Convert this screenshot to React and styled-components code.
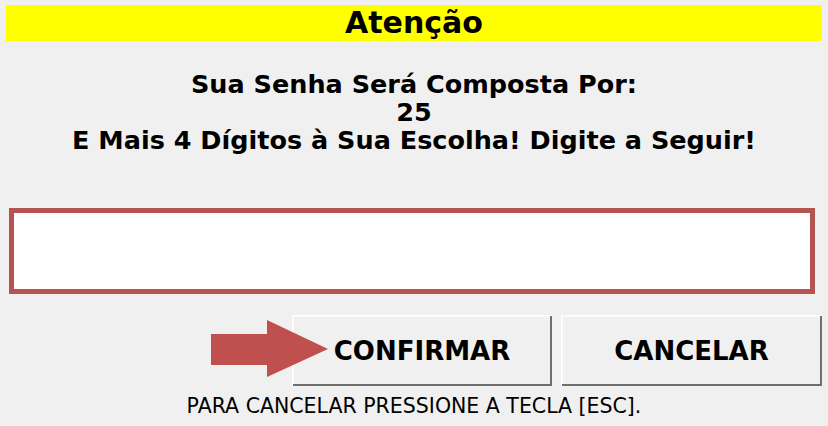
import React from 'react';
import styled, { createGlobalStyle } from 'styled-components';

const GlobalStyle = createGlobalStyle`
  html, body {
    margin: 0;
    background: #f0f0f0;
  }
  body {
    font-family: "DejaVu Sans", "Liberation Sans", sans-serif;
    color: #000;
  }
`;

const Dialog = styled.div`
  display: flex;
  flex-direction: column;
  width: 828px;
  height: 426px;
  box-sizing: border-box;
  padding: 5px 6px 0;
  background: #f0f0f0;
  overflow: hidden;
`;

const TitleBar = styled.div`
  height: 36px;
  background: #ffff00;
  text-align: center;
  font-size: 30px;
  font-weight: bold;
  line-height: 36px;
`;

const Message = styled.div`
  margin-top: 29px;
  text-align: center;
  font-size: 25.5px;
  font-weight: bold;
  line-height: 28px;
`;

const PasswordInput = styled.input`
  display: block;
  box-sizing: border-box;
  width: 806px;
  height: 86px;
  margin: 54px 0 0 3px;
  border: 5px solid #b55451;
  background: #fff;
  outline: none;
  font-size: 26px;
  font-family: inherit;
  padding: 0 10px;
`;

const ButtonRow = styled.div`
  display: flex;
  justify-content: flex-end;
  gap: 9px;
  margin-top: 21px;
`;

const ButtonSlot = styled.div`
  position: relative;
`;

const DialogButton = styled.button`
  box-sizing: border-box;
  width: ${(p) => p.width}px;
  height: 71px;
  background: #f0f0f0;
  border: none;
  box-shadow: inset 1px 1px #ffffff, inset -2px -2px #6f6f6f, inset 2px 2px #f8f8f8;
  font-family: inherit;
  font-size: 26px;
  font-weight: bold;
  color: #000;
  padding: 0;
  cursor: pointer;
`;

const Arrow = styled.svg`
  position: absolute;
  left: -81px;
  top: 5px;
  pointer-events: none;
`;

const Footer = styled.div`
  margin-top: 8px;
  text-align: center;
  font-size: 20.5px;
  line-height: 24px;
`;

function App() {
  return (
    <>
      <GlobalStyle />
      <Dialog>
        <TitleBar>Atenção</TitleBar>
        <Message>
          <div>Sua Senha Será Composta Por:</div>
          <div>25</div>
          <div>E Mais 4 Dígitos à Sua Escolha! Digite a Seguir!</div>
        </Message>
        <PasswordInput type="password" />
        <ButtonRow>
          <ButtonSlot>
            <DialogButton width={260}>CONFIRMAR</DialogButton>
            <Arrow width="118" height="58" viewBox="0 0 118 58">
              <path d="M0 14 H56 V0 L117 29 L56 57 V45 H0 Z" fill="#c0504d" />
            </Arrow>
          </ButtonSlot>
          <DialogButton width={261}>CANCELAR</DialogButton>
        </ButtonRow>
        <Footer>PARA CANCELAR PRESSIONE A TECLA [ESC].</Footer>
      </Dialog>
    </>
  );
}

export default App;
